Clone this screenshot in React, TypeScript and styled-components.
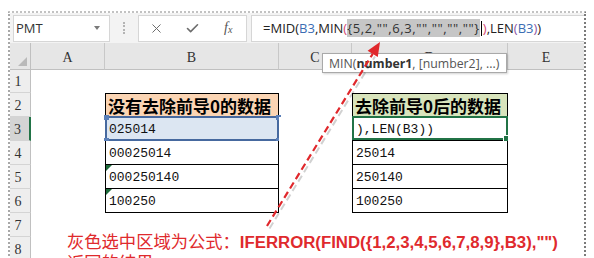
import styled, { createGlobalStyle, css } from 'styled-components';
import { Check, X } from 'lucide-react';

const GlobalStyle = createGlobalStyle`
  html, body {
    margin: 0;
    padding: 0;
    background: #fff;
  }
`;

const Page = styled.div`
  position: relative;
  width: 594px;
  height: 258px;
  box-sizing: border-box;
  padding: 11px 8px 0 8px;
  overflow: hidden;
  background: #fff;
`;

const Sheet = styled.div`
  height: 100%;
  display: flex;
  flex-direction: column;
  border-left: 2px dotted #a8a8a8;
  border-top: 2px dotted #c2c2c2;
  border-right: 2px dotted #7a7a7a;
`;

const FormulaBar = styled.div`
  flex: none;
  height: 30px;
  display: flex;
  align-items: center;
  padding-left: 3px;
  background: #f3f3f3;
  font-family: 'Open Sans', 'Liberation Sans', sans-serif;
`;

const NameBox = styled.div`
  width: 97px;
  height: 27px;
  box-sizing: border-box;
  display: flex;
  align-items: center;
  justify-content: space-between;
  padding: 0 9px 0 2px;
  background: #fff;
  border: 1px solid #d6d6d6;
  font-size: 13px;
  color: #333;
`;

const DropArrow = styled.span`
  width: 0;
  height: 0;
  border-left: 3.5px solid transparent;
  border-right: 3.5px solid transparent;
  border-top: 4px solid #7a7a7a;
`;

const Grip = styled.span`
  width: 0;
  height: 12px;
  margin: 0 13px 0 13px;
  border-left: 2px dotted #b4b4b4;
`;

const ButtonBox = styled.div`
  width: 109px;
  height: 27px;
  box-sizing: border-box;
  display: flex;
  background: #fff;
  border: 1px solid #d6d6d6;
`;

const IconSlot = styled.span`
  width: 37px;
  display: flex;
  align-items: center;
  justify-content: center;
  color: #6d6d6d;
`;

const Fx = styled.span`
  font-family: 'Liberation Serif', serif;
  font-style: italic;
  font-size: 14px;
  color: #555;
  sub {
    font-size: 10px;
    vertical-align: -1px;
  }
`;

const FormulaInput = styled.div`
  flex: 1;
  height: 27px;
  margin-left: 4px;
  box-sizing: border-box;
  display: flex;
  align-items: center;
  padding-left: 11px;
  background: #fff;
  border: 1px solid #d6d6d6;
  border-right: none;
  font-size: 13px;
  color: #222;
  white-space: pre;
`;

const Tint = styled.span<{ $c: string }>`
  color: ${(p) => p.$c};
`;

const Selected = styled.span`
  background: #c6c6c6;
  color: #333;
  letter-spacing: 0.6px;
`;

const Caret = styled.span`
  display: inline-block;
  width: 1px;
  height: 15px;
  margin: 0 1px;
  background: #000;
`;

const Grid = styled.div`
  display: grid;
  grid-template-columns: 21px 74px 174px 73px 156px 1fr;
  grid-template-rows: 27px 23px repeat(7, 24px);
  font-family: 'Liberation Mono', monospace;
`;

const Corner = styled.div`
  position: relative;
  background: #e6e6e6;
  border-bottom: 1px solid #c0c0c0;
  border-right: 1px solid #c0c0c0;
  box-sizing: border-box;
  &::after {
    content: '';
    position: absolute;
    right: 3px;
    bottom: 3px;
    border-left: 9px solid transparent;
    border-bottom: 9px solid #b9b9b9;
  }
`;

const ColHead = styled.div<{ $last?: boolean }>`
  box-sizing: border-box;
  display: flex;
  justify-content: center;
  align-items: flex-end;
  padding-bottom: 3px;
  background: #e6e6e6;
  border-bottom: 1px solid #c0c0c0;
  border-right: ${(p) => (p.$last ? 'none' : '1px solid #c8c8c8')};
  font-family: 'Liberation Serif', serif;
  font-size: 14px;
  color: #333;
`;

const RowHead = styled.div<{ $active?: boolean }>`
  box-sizing: border-box;
  display: flex;
  justify-content: center;
  align-items: flex-end;
  padding: 0 4px 2px 0;
  background: ${(p) => (p.$active ? '#d4d4d4' : '#eeeeee')};
  border-bottom: 1px solid #d4d4d4;
  border-right: ${(p) => (p.$active ? '2px solid #217346' : '1px solid #c0c0c0')};
  font-family: 'Liberation Serif', serif;
  font-size: 14px;
  color: #333;
`;

const Cell = styled.div<{ $fill?: string; $boxed?: boolean; $top?: boolean; $head?: boolean; $flag?: boolean }>`
  position: relative;
  box-sizing: border-box;
  display: flex;
  align-items: flex-end;
  padding: 0 0 3px 3px;
  background: ${(p) => p.$fill || '#fff'};
  font-size: 13px;
  color: #111;
  white-space: nowrap;
  ${(p) =>
    p.$boxed &&
    css`
      border: 1px solid #000;
      border-top-width: ${p.$top ? 1 : 0}px;
    `}
  ${(p) =>
    p.$head &&
    css`
      align-items: center;
      padding: 0 0 0 2px;
      font-family: 'Noto Sans CJK SC', sans-serif;
      font-weight: 700;
      font-size: 17px;
      color: #000;
    `}
  ${(p) =>
    p.$flag &&
    css`
      &::before {
        content: '';
        position: absolute;
        left: 0;
        top: 0;
        border-top: 6px solid #1e6b3b;
        border-right: 6px solid transparent;
      }
    `}
`;

const RefFrame = styled.span`
  position: absolute;
  inset: -1px -1px -1px -1px;
  border: 2px solid #46699f;
  pointer-events: none;
`;

const Handle = styled.span<{ $x: 'l' | 'r'; $y: 't' | 'b' }>`
  position: absolute;
  width: 5px;
  height: 5px;
  background: #5a7fb8;
  ${(p) => (p.$x === 'l' ? 'left: -3.5px;' : 'right: -3.5px;')}
  ${(p) => (p.$y === 't' ? 'top: -3.5px;' : 'bottom: -3.5px;')}
`;

const ActiveFrame = styled.span`
  position: absolute;
  inset: -1px -1px 0 -1px;
  border: 2px solid #217346;
  pointer-events: none;
  &::after {
    content: '';
    position: absolute;
    right: -4px;
    bottom: -4px;
    width: 5px;
    height: 5px;
    background: #217346;
    border: 1px solid #fff;
  }
`;

const Tooltip = styled.div`
  position: absolute;
  left: 322px;
  top: 53px;
  height: 20px;
  box-sizing: border-box;
  display: flex;
  align-items: center;
  padding: 0 7px 0 6px;
  background: #fff;
  border: 1px solid #a9a9a9;
  box-shadow: 1px 1px 2px rgba(0, 0, 0, 0.18);
  font-family: 'Open Sans', 'Liberation Sans', sans-serif;
  font-size: 12.3px;
  color: #555;
  white-space: pre;
  b {
    color: #333;
  }
`;

const Overlay = styled.svg`
  position: absolute;
  left: 0;
  top: 0;
  pointer-events: none;
`;

const Note = styled.div`
  position: absolute;
  left: 67px;
  top: 231px;
  color: #df2a2d;
  font-family: 'Noto Sans CJK SC', sans-serif;
  font-size: 17.3px;
  line-height: 19px;
  white-space: nowrap;
`;

const NoteCode = styled.span`
  font-family: 'Liberation Sans', Arial, sans-serif;
  font-weight: 700;
  font-size: 16.8px;
`;

type CellData = {
  text?: string;
  head?: boolean;
  fill?: string;
  flag?: boolean;
  sel?: 'ref' | 'active';
};

const rows: { n: number; b?: CellData; d?: CellData }[] = [
  { n: 1 },
  {
    n: 2,
    b: { text: '没有去除前导0的数据', head: true, fill: '#fbd5b4' },
    d: { text: '去除前导0后的数据', head: true, fill: '#d8e4bc' },
  },
  { n: 3, b: { text: '025014', fill: '#dce6f2', sel: 'ref' }, d: { text: '),LEN(B3))', sel: 'active' } },
  { n: 4, b: { text: '00025014' }, d: { text: '25014' } },
  { n: 5, b: { text: '000250140', flag: true }, d: { text: '250140' } },
  { n: 6, b: { text: '100250', flag: true }, d: { text: '100250' } },
  { n: 7 },
  { n: 8 },
];

function DataCell({ data, top }: { data?: CellData; top: boolean }) {
  if (!data) return <Cell />;
  return (
    <Cell $boxed $top={top} $head={data.head} $fill={data.fill} $flag={data.flag}>
      {data.text}
      {data.sel === 'ref' && (
        <RefFrame>
          <Handle $x="l" $y="t" />
          <Handle $x="r" $y="t" />
          <Handle $x="l" $y="b" />
          <Handle $x="r" $y="b" />
        </RefFrame>
      )}
      {data.sel === 'active' && <ActiveFrame />}
    </Cell>
  );
}

export default function App() {
  return (
    <Page>
      <GlobalStyle />
      <Sheet>
        <FormulaBar>
          <NameBox>
            PMT
            <DropArrow />
          </NameBox>
          <Grip />
          <ButtonBox>
            <IconSlot>
              <X size={15} strokeWidth={1.6} />
            </IconSlot>
            <IconSlot>
              <Check size={15} strokeWidth={2.6} />
            </IconSlot>
            <IconSlot>
              <Fx>
                f<sub>x</sub>
              </Fx>
            </IconSlot>
          </ButtonBox>
          <FormulaInput>
            =MID(<Tint $c="#3b6db3">B3</Tint>,MIN<Tint $c="#d2466f">(</Tint>
            <Selected>{'{5,2,"",6,3,"","","",""}'}</Selected>
            <Caret />
            <Tint $c="#d2466f">)</Tint>,LEN<Tint $c="#8a55a6">(</Tint>
            <Tint $c="#3b6db3">B3</Tint>
            <Tint $c="#8a55a6">)</Tint>)
          </FormulaInput>
        </FormulaBar>
        <Grid>
          <Corner />
          <ColHead>A</ColHead>
          <ColHead>B</ColHead>
          <ColHead>C</ColHead>
          <ColHead>D</ColHead>
          <ColHead $last>E</ColHead>
          {rows.map((r) => (
            <>
              <RowHead key={`h${r.n}`} $active={r.n === 3}>
                {r.n}
              </RowHead>
              <Cell key={`a${r.n}`} />
              <DataCell key={`b${r.n}`} data={r.b} top={r.n === 2} />
              <Cell key={`c${r.n}`} />
              <DataCell key={`d${r.n}`} data={r.d} top={r.n === 2} />
              <Cell key={`e${r.n}`} />
            </>
          ))}
        </Grid>
      </Sheet>
      <Tooltip>
        MIN(<b>number1</b>, [number2], ...)
      </Tooltip>
      <Note>
        灰色选中区域为公式：<NoteCode>IFERROR(FIND({'{1,2,3,4,5,6,7,8,9}'},B3),"")</NoteCode>
        <br />
        返回的结果
      </Note>
      <Overlay width={594} height={258} viewBox="0 0 594 258">
        <line x1={268} y1={227} x2={373.5} y2={55} stroke="rgba(0,0,0,0.18)" strokeWidth={2} strokeDasharray="7 4" transform="translate(1.5 1.5)" />
        <line x1={267} y1={226} x2={372.7} y2={53.9} stroke="#e0282c" strokeWidth={2.2} strokeDasharray="7 4" />
        <polygon points="380,42 377.8,57 367.6,50.8" fill="#e0282c" />
      </Overlay>
    </Page>
  );
}
